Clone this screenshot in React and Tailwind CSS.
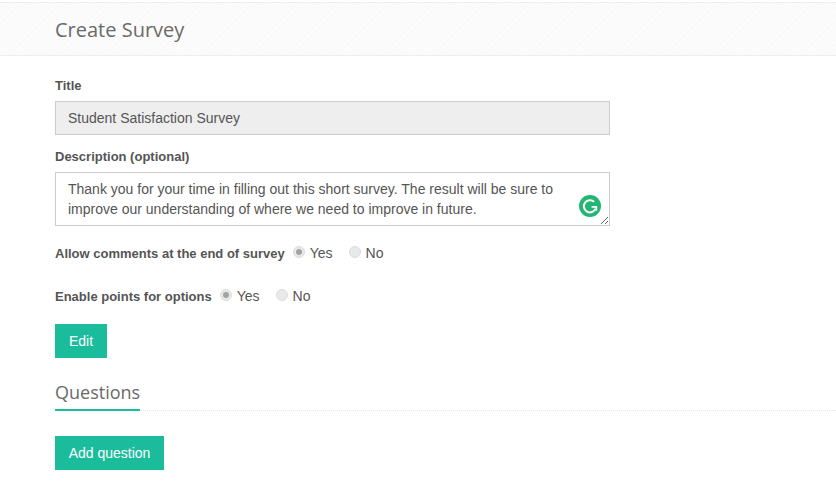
import React from 'react';

const Radio = ({ checked, label }) => (
  <span className="flex items-center">
    <span className="w-[12px] h-[12px] rounded-full bg-[#e9e9e9] border border-[#dcdcdc] flex items-center justify-center mb-[3px]">
      {checked && <span className="w-[6px] h-[6px] rounded-full bg-[#a3a3a3]" />}
    </span>
    <span className="ml-[5px]">{label}</span>
  </span>
);

const RadioRow = ({ label }) => (
  <div className="flex items-center h-[20px]">
    <span className="font-bold text-[13px] mr-[8px] mt-[2px]">{label}</span>
    <Radio checked label="Yes" />
    <span className="w-[16px]" />
    <Radio label="No" />
  </div>
);

export default function App() {
  return (
    <div className="w-[836px] h-[496px] overflow-hidden bg-white text-[14px] text-[#555555] font-['Liberation_Sans',Arial,sans-serif]">
      <div className="mt-[2px] h-[54px] border-y border-[#eeeeee] bg-[#fafafa] pl-[55px] flex items-center bg-[repeating-linear-gradient(135deg,#fcfcfc_0px,#fcfcfc_2px,#fafafa_2px,#fafafa_4px)]">
        <h1 className="font-['Open_Sans',sans-serif] text-[20px] text-[#6a6a6a] leading-none mt-[1px]">Create Survey</h1>
      </div>

      <div className="pl-[55px] pt-[21px]">
        <label className="block font-bold text-[13px] leading-[18px]">Title</label>
        <div className="w-[555px] h-[34px] mt-[6px] px-[12px] flex items-center bg-[#eeeeee] border border-[#cccccc]">
          Student Satisfaction Survey
        </div>

        <label className="block font-bold text-[13px] leading-[18px] mt-[13px]">Description (optional)</label>
        <div className="relative w-[555px] h-[54px] mt-[6px] px-[12px] pt-[6px] border border-[#cccccc] leading-[20px]">
          <div>Thank you for your time in filling out this short survey. The result will be sure to improve our understanding of where we need to improve in future.</div>
          <svg className="absolute right-[8px] bottom-[8px]" width="22" height="22" viewBox="0 0 22 22">
            <circle cx="11" cy="11" r="11" fill="#23b573" />
            <path d="M15.2 6.9A6.1 6.1 0 1 0 16.6 13.6" fill="none" stroke="#ffffff" strokeWidth="2" />
            <path d="M12.6 11.9h4.8v3.9" fill="none" stroke="#ffffff" strokeWidth="1.6" />
          </svg>
          <svg className="absolute right-0 bottom-0" width="9" height="9" viewBox="0 0 9 9">
            <path d="M1 8L8 1M5 8L8 5" stroke="#666666" strokeWidth="1" />
          </svg>
        </div>

        <div className="mt-[17px]">
          <RadioRow label="Allow comments at the end of survey" />
        </div>
        <div className="mt-[23px]">
          <RadioRow label="Enable points for options" />
        </div>

        <button className="block mt-[18px] h-[34px] w-[52px] bg-[#1abc9c] text-white text-[14px]">Edit</button>
      </div>

      <div className="ml-[55px] mt-[21px] border-b border-dotted border-[#e5e5e5] h-[32px]">
        <span className="inline-block h-[32px] border-b-2 border-[#1abc9c] font-['Open_Sans',sans-serif] text-[18px] leading-[26px] text-[#6a6a6a]">Questions</span>
      </div>

      <button className="block ml-[55px] mt-[25px] h-[34px] w-[109px] bg-[#1abc9c] text-white text-[14px]">Add question</button>
    </div>
  );
}
